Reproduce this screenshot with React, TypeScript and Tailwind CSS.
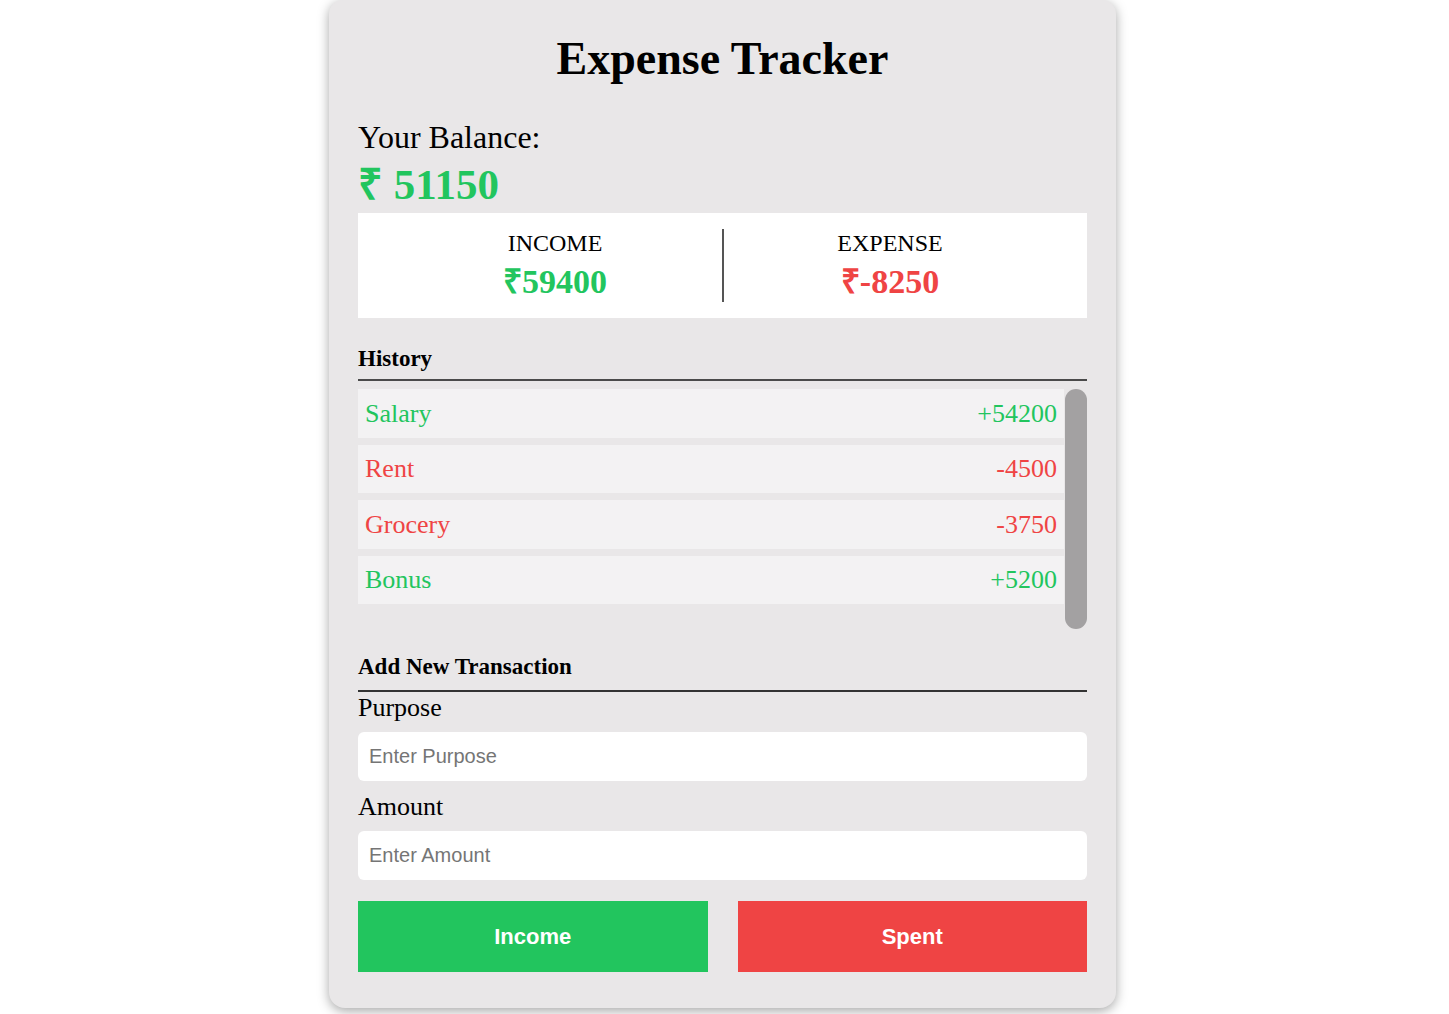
import React from "react";

const serif = "font-['Liberation_Serif','Times_New_Roman',serif]";

const history = [
  { name: "Salary", amount: "+54200", income: true },
  { name: "Rent", amount: "-4500", income: false },
  { name: "Grocery", amount: "-3750", income: false },
  { name: "Bonus", amount: "+5200", income: true },
];

export default function App() {
  return (
    <div className="min-h-[1014px] bg-white pr-[4px]">
      <div
        className={`mx-auto w-[787px] rounded-b-[16px] rounded-t-[14px] bg-[#e9e7e8] px-[29px] pt-[36px] pb-[36px] shadow-[0_3px_12px_rgba(0,0,0,0.35)] ${serif} text-black`}
      >
        <h1 className="text-center text-[46px] leading-[46px] font-bold">Expense Tracker</h1>

        <div className="mt-[37px] text-[32px] leading-[36px]">Your Balance:</div>
        <div className="mt-[6px] text-[43px] leading-[48px] font-bold text-[#22c55e]">₹ 51150</div>

        <div className="mt-[4px] flex justify-center bg-white py-[16px]">
          <div className="flex w-[333px] flex-col items-center">
            <div className="text-[24px] leading-[28px]">INCOME</div>
            <div className="mt-[5px] text-[34px] leading-[40px] font-bold text-[#22c55e]">₹59400</div>
          </div>
          <div className="w-[2px] self-stretch bg-[#555]" />
          <div className="flex w-[333px] flex-col items-center">
            <div className="text-[24px] leading-[28px]">EXPENSE</div>
            <div className="mt-[5px] text-[34px] leading-[40px] font-bold text-[#ef4444]">₹-8250</div>
          </div>
        </div>

        <div className="mt-[27px] border-b-2 border-[#4a4a4a] pb-[6px] text-[23px] leading-[28px] font-bold">
          History
        </div>

        <div className="mt-[8px] flex h-[240px] gap-[1px]">
          <div className="flex flex-1 flex-col gap-[7px]">
            {history.map((h) => (
              <div
                key={h.name}
                className={`flex h-[48.5px] items-center justify-between bg-[#f3f2f3] px-[7px] text-[26px] ${
                  h.income ? "text-[#22c55e]" : "text-[#ef4444]"
                }`}
              >
                <span>{h.name}</span>
                <span>{h.amount}</span>
              </div>
            ))}
          </div>
          <div className="w-[22px] rounded-full bg-[#a3a1a2]" />
        </div>

        <div className="mt-[24px] border-b-2 border-[#333] pb-[9px] text-[23px] leading-[28px] font-bold">
          Add New Transaction
        </div>

        <div className="mt-[1px] text-[26px] leading-[30px]">Purpose</div>
        <input
          className="mt-[9px] block h-[49px] w-full rounded-[6px] bg-white pl-[11px] font-['Liberation_Sans',Arial,sans-serif] text-[20px] outline-none placeholder:text-[#757575]"
          placeholder="Enter Purpose"
        />
        <div className="mt-[11px] text-[26px] leading-[30px]">Amount</div>
        <input
          className="mt-[9px] block h-[49px] w-full rounded-[6px] bg-white pl-[11px] font-['Liberation_Sans',Arial,sans-serif] text-[20px] outline-none placeholder:text-[#757575]"
          placeholder="Enter Amount"
        />

        <div className="mt-[21px] flex gap-[30px]">
          <button className="h-[71px] flex-1 bg-[#22c55e] font-['Liberation_Sans',Arial,sans-serif] text-[22px] font-bold text-white">
            Income
          </button>
          <button className="h-[71px] flex-1 bg-[#ef4444] font-['Liberation_Sans',Arial,sans-serif] text-[22px] font-bold text-white">
            Spent
          </button>
        </div>
      </div>
    </div>
  );
}
